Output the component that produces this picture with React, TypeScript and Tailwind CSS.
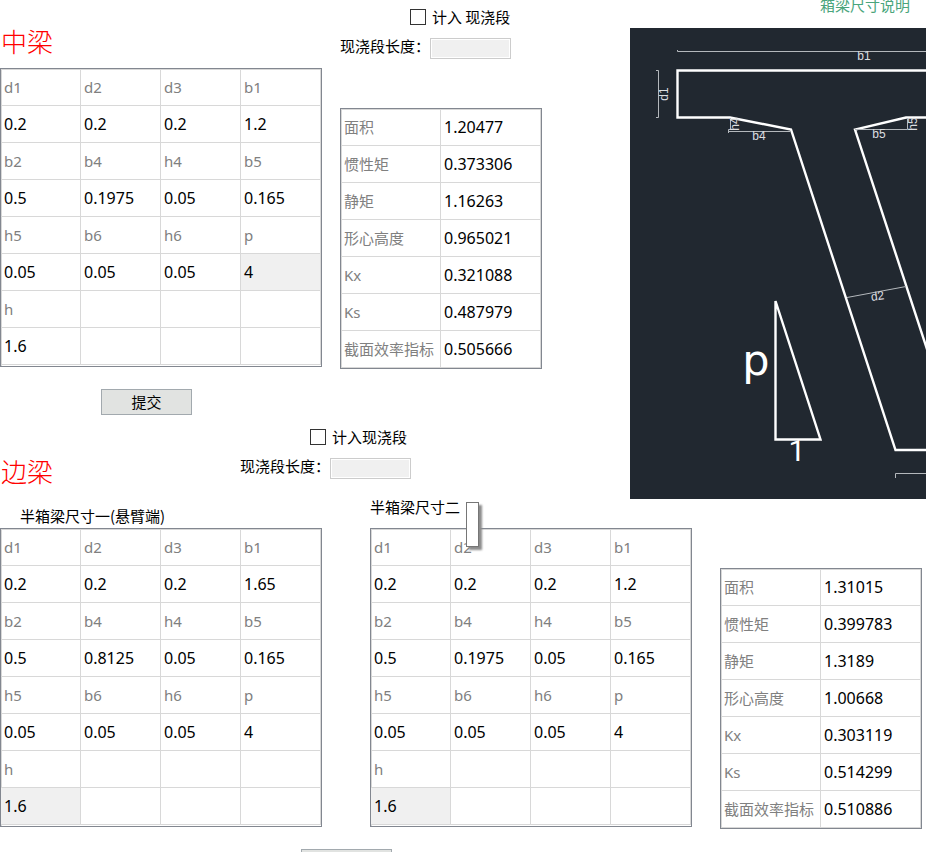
import React, { useState } from "react";

const FORM_FONT = "font-['Noto_Sans_CJK_SC',sans-serif]";
const GRID_FONT = "font-['Noto_Sans','Noto_Sans_CJK_SC',sans-serif]";

type Rows = string[][];

const midBeam: Rows = [
  ["d1", "d2", "d3", "b1"],
  ["0.2", "0.2", "0.2", "1.2"],
  ["b2", "b4", "h4", "b5"],
  ["0.5", "0.1975", "0.05", "0.165"],
  ["h5", "b6", "h6", "p"],
  ["0.05", "0.05", "0.05", "4"],
  ["h", "", "", ""],
  ["1.6", "", "", ""],
];

const sideBeamOne: Rows = midBeam.map((row, r) => {
  if (r === 1) return ["0.2", "0.2", "0.2", "1.65"];
  if (r === 3) return ["0.5", "0.8125", "0.05", "0.165"];
  return row;
});

const resultNames = ["面积", "惯性矩", "静矩", "形心高度", "Kx", "Ks", "截面效率指标"];
const midResults = ["1.20477", "0.373306", "1.16263", "0.965021", "0.321088", "0.487979", "0.505666"];
const sideResults = ["1.31015", "0.399783", "1.3189", "1.00668", "0.303119", "0.514299", "0.510886"];

function GridFrame({ children, className = "" }: { children: React.ReactNode; className?: string }) {
  return (
    <div className={`w-fit border border-[#828790] shadow-[inset_1px_1px_0_#d8d8d8] ${GRID_FONT} ${className}`}>
      {children}
    </div>
  );
}

const CELL = "h-[37px] border-r border-b border-[#d8d8d8] py-0 pr-0 pl-[3px] text-left font-normal whitespace-nowrap";

function SizeTable({ rows, selected, label }: { rows: Rows; selected: [number, number]; label: string }) {
  return (
    <GridFrame className="pb-px">
      <table aria-label={label} className="w-80 table-fixed border-separate border-spacing-0">
        <tbody>
          {rows.map((row, r) => (
            <tr key={r}>
              {row.map((value, c) => {
                const tone = r % 2 === 0 ? "text-[15px] text-[#808080]" : "text-base text-black";
                const fill = selected[0] === r && selected[1] === c ? "bg-[#f0f0f0]" : "";
                return (
                  <td key={c} className={`${CELL} ${tone} ${fill}`}>
                    {value}
                  </td>
                );
              })}
            </tr>
          ))}
        </tbody>
      </table>
    </GridFrame>
  );
}

function ResultTable({ values, label }: { values: string[]; label: string }) {
  return (
    <GridFrame>
      <table aria-label={label} className="w-[200px] table-fixed border-separate border-spacing-0">
        <tbody>
          {resultNames.map((name, i) => (
            <tr key={name}>
              <th scope="row" className={`${CELL} text-[15px] text-[#808080]`}>
                {name}
              </th>
              <td className={`${CELL} text-base text-black`}>{values[i]}</td>
            </tr>
          ))}
        </tbody>
      </table>
    </GridFrame>
  );
}

function CastInPlace({ id, text }: { id: string; text: string }) {
  const [checked, setChecked] = useState(false);
  const [length, setLength] = useState("");
  return (
    <div className={`text-[15px] text-black ${FORM_FONT}`}>
      <div className="flex h-4 items-center gap-[6px] pl-[70px]">
        <input
          id={`${id}-on`}
          type="checkbox"
          checked={checked}
          onChange={(e) => setChecked(e.target.checked)}
          className="size-4 appearance-none border border-[#333] bg-white checked:bg-[#333]"
        />
        <label htmlFor={`${id}-on`} className="leading-4 whitespace-nowrap">
          {text}
        </label>
      </div>
      <div className="mt-[13px] flex items-start">
        <label htmlFor={`${id}-len`} className="w-[90px] leading-4 whitespace-nowrap">
          现浇段长度：
        </label>
        <input
          id={`${id}-len`}
          type="text"
          disabled={!checked}
          value={length}
          onChange={(e) => setLength(e.target.value)}
          className="h-[21px] w-[81px] border border-[#ccc] bg-[#f0f0f0] px-1 shadow-[inset_0_0_0_1px_#fff]"
        />
      </div>
    </div>
  );
}

function SubmitButton({ label }: { label?: string }) {
  return (
    <button
      type="button"
      aria-label="提交"
      className={`h-[26px] w-[91px] border border-[#a2a9ae] bg-[#e1e3e1] text-[15px] leading-6 text-black ${FORM_FONT}`}
    >
      {label}
    </button>
  );
}

function BeamTitle({ children }: { children: string }) {
  return (
    <h2 className="pl-px font-['Noto_Sans_CJK_SC',sans-serif] text-[26px] leading-[26px] font-light text-[#ff0000]">
      {children}
    </h2>
  );
}

function SectionDrawing() {
  return (
    <svg role="img" aria-label="箱梁尺寸说明" className="block h-[471px] w-full bg-[#212830]">
      <g fill="none" stroke="#fff" strokeWidth="2.4">
        <path d="M420 42.5H47.5V89.5H100L161 101.5L265.5 422H420" />
        <path d="M420 89.5H276L225 101.5L330 422" />
        <path d="M145.5 273V411.5H190.5Z" />
      </g>
      <g fill="none" stroke="#b4b8bc" strokeWidth="1">
        <path d="M47.5 22V23.5H420" />
        <path d="M26 42.5H28.5V89.5H26" />
        <path d="M100.5 90V101.5H98.5V105M98.5 103.5H160" />
        <path d="M225 101.5H277.5V90" />
        <path d="M217 269.5L276 258.5" />
        <path d="M265.5 450V445.5H420" />
      </g>
      <g fill="#dcdee0" textAnchor="middle" className="font-['Liberation_Sans',sans-serif] text-[12px]">
        <text x="234" y="32">b1</text>
        <text x="129" y="112">b4</text>
        <text x="249" y="110">b5</text>
        <text transform="translate(38 66) rotate(-90)">d1</text>
        <text transform="translate(109 96) rotate(-90)">h4</text>
        <text transform="translate(287 96) rotate(-90)">h5</text>
        <text transform="translate(248 272) rotate(-8)">d2</text>
      </g>
      <g fill="#fff" textAnchor="middle">
        <text x="126" y="347" className="font-['DejaVu_Sans',sans-serif] text-[43px]">p</text>
        <text x="167" y="433" className="font-[Roboto,sans-serif] text-[30px]">1</text>
      </g>
    </svg>
  );
}

export default function App() {
  return (
    <main lang="zh-CN" className="h-screen overflow-hidden bg-white">
      <div className="flex">
        <div className="w-[630px] shrink-0">
          <section className="flex">
            <div className="w-[340px] pt-7">
              <BeamTitle>中梁</BeamTitle>
              <div className="mt-[14px]">
                <SizeTable rows={midBeam} selected={[5, 3]} label="中梁尺寸" />
              </div>
              <div className="mt-[22px] flex pl-[101px]">
                <SubmitButton label="提交" />
              </div>
            </div>
            <div className="pt-[9px]">
              <CastInPlace id="mid" text="计入 现浇段" />
              <div className="mt-[49px]">
                <ResultTable values={midResults} label="中梁结果" />
              </div>
            </div>
          </section>
          <section className="flex pt-[14px] pb-[15px]">
            <div className="w-60 pt-[29px]">
              <BeamTitle>边梁</BeamTitle>
            </div>
            <CastInPlace id="side" text="计入现浇段" />
          </section>
        </div>
        <aside className="min-w-0 flex-1">
          <h3 className="h-7 pl-[190px] font-['Noto_Sans_CJK_SC',sans-serif] text-[15px] leading-[10px] whitespace-nowrap text-[#4aa57c]">
            箱梁尺寸说明
          </h3>
          <SectionDrawing />
        </aside>
      </div>

      <section className="flex items-start">
        <div className="w-[370px] shrink-0 pt-[9px]">
          <h3 className={`mb-1 pl-5 text-[15px] leading-4 text-black ${FORM_FONT}`}>半箱梁尺寸一(悬臂端)</h3>
          <SizeTable rows={sideBeamOne} selected={[7, 0]} label="半箱梁尺寸一" />
        </div>
        <div className="relative w-[350px] shrink-0">
          <h3 className={`mb-[13px] text-[15px] leading-4 text-black ${FORM_FONT}`}>半箱梁尺寸二</h3>
          <SizeTable rows={midBeam} selected={[7, 0]} label="半箱梁尺寸二" />
          <div
            role="tooltip"
            className="absolute top-[3px] left-24 h-[45px] w-[13px] border border-[#767676] bg-white shadow-[3px_3px_2px_#8c8c8c]"
          />
        </div>
        <div className="shrink-0 pt-[69px]">
          <ResultTable values={sideResults} label="边梁结果" />
        </div>
      </section>
      <div className="mt-5 flex pl-[301px]">
        <SubmitButton />
      </div>
    </main>
  );
}
